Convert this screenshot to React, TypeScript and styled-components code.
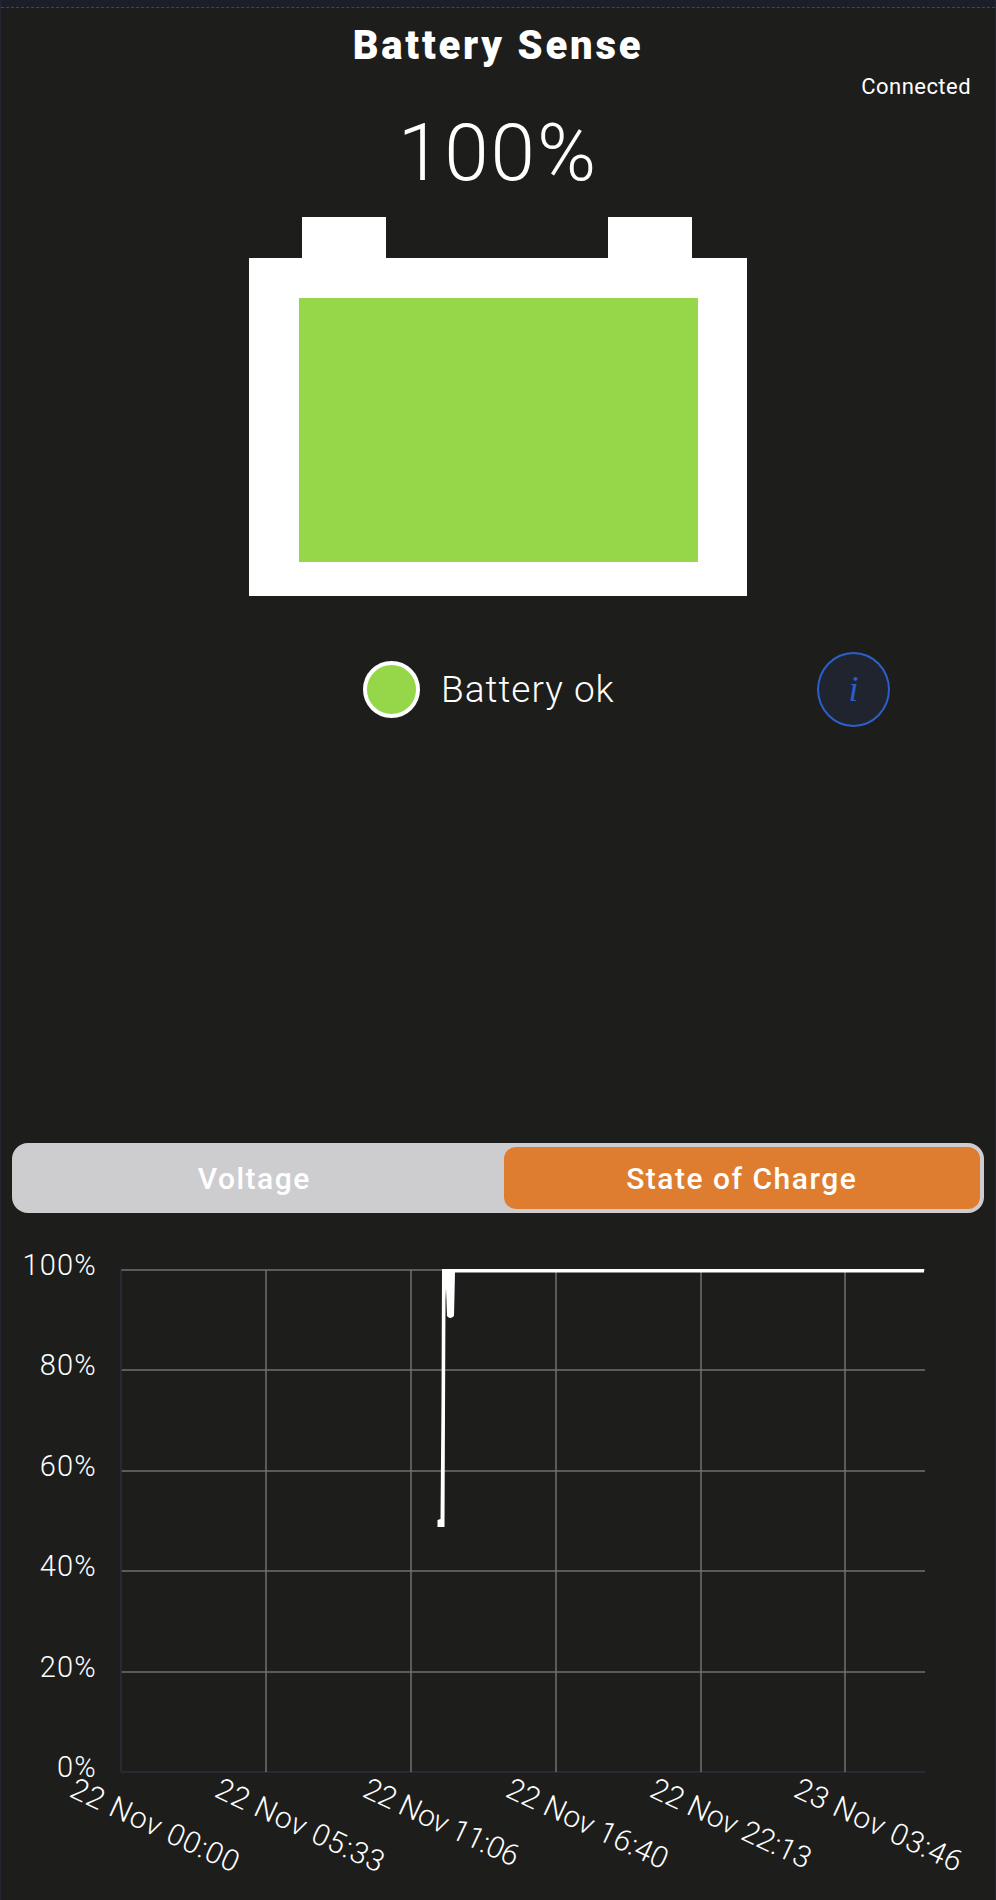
import React from "react";
import styled, { createGlobalStyle } from "styled-components";

const Global = createGlobalStyle`
  html, body { margin: 0; padding: 0; background: #1d1d1c; }
  #root { width: 996px; height: 1900px; overflow: hidden; }
`;

const Page = styled.div`
  width: 996px;
  height: 1900px;
  box-sizing: border-box;
  background: #1d1d1c;
  color: #fff;
  font-family: Roboto, "Liberation Sans", sans-serif;
  display: flex;
  flex-direction: column;
  border-left: 1px solid #242733;
  border-right: 1px solid #242733;
  & > * { flex: none; }
`;

const TopBar = styled.div`
  height: 7px;
  background: #1b1f29;
  border-bottom: 1px dashed #45454a;
`;

const Title = styled.h1`
  margin: 15px 0 0;
  height: 45px;
  line-height: 45px;
  text-align: center;
  font-size: 40px;
  font-weight: 900;
  letter-spacing: 2.8px;
`;

const StatusLabel = styled.div`
  margin: 7px 24px 0 0;
  height: 24px;
  line-height: 24px;
  text-align: right;
  font-size: 22px;
  font-weight: 400;
  letter-spacing: 0.45px;
`;

const Percent = styled.div`
  margin-top: 9px;
  height: 90px;
  line-height: 90px;
  text-align: center;
  font-size: 80px;
  font-weight: 300;
  letter-spacing: 2px;
`;

const BatteryWrap = styled.div`
  margin-top: 19px;
  display: flex;
  justify-content: center;
  height: 380px;
  svg { display: block; }
`;

const StatusRow = styled.div`
  margin-top: 54px;
  padding: 0 105px 0 362px;
  height: 76px;
  display: flex;
  align-items: center;
`;

const Dot = styled.span`
  width: 57px;
  height: 57px;
  box-sizing: border-box;
  border-radius: 50%;
  background: #95d749;
  border: 4px solid #fff;
  flex: none;
`;

const StatusText = styled.span`
  margin-left: 21px;
  font-size: 37px;
  font-weight: 300;
  letter-spacing: 1px;
`;

const InfoButton = styled.button`
  margin-left: auto;
  width: 73px;
  height: 75px;
  padding: 0;
  border-radius: 50%;
  border: 2.5px solid #2b5fcb;
  background: #20242f;
  color: #2b5fcb;
  font-family: "Liberation Serif", serif;
  font-style: italic;
  font-size: 36px;
`;

const Segmented = styled.div`
  margin: 416px 11px 0 11px;
  height: 70px;
  box-sizing: border-box;
  padding: 4px;
  border-radius: 16px;
  background: #cdcdcf;
  display: grid;
  grid-template-columns: 1fr 1fr;
  column-gap: 11px;
`;

const Segment = styled.div<{ $active?: boolean }>`
  border-radius: 12px;
  display: flex;
  align-items: center;
  justify-content: center;
  font-size: 30px;
  font-weight: 500;
  letter-spacing: 1.5px;
  color: #fff;
  background: ${(p) => (p.$active ? "#de7d30" : "transparent")};
`;

const Chart = styled.svg`
  display: block;
  margin-top: 33px;
  text {
    font-family: Roboto, "Liberation Sans", sans-serif;
    font-weight: 300;
    fill: #fff;
  }
`;

const ORIGIN = 1246;
const xs = [120, 265, 410, 555, 700, 844];
const ys = [1270, 1370, 1471, 1571, 1672, 1772];
const yLabels = ["100%", "80%", "60%", "40%", "20%", "0%"];
const xLabels = [
  ["22 Nov 00:00", 67, 0.85],
  ["22 Nov 05:33", 212, 0.85],
  ["22 Nov 11:06", 360, -0.45],
  ["22 Nov 16:40", 503, 0.15],
  ["22 Nov 22:13", 647, 0.05],
  ["23 Nov 03:46", 791, 0.75],
] as const;

export default function App() {
  return (
    <Page>
      <Global />
      <TopBar />
      <Title>Battery Sense</Title>
      <StatusLabel>Connected</StatusLabel>
      <Percent>100%</Percent>
      <BatteryWrap>
        <svg width="498" height="380" viewBox="0 0 498 380">
          <path fill="#fff" d="M0 41H53V0H137V41H359V0H443V41H498V379H0Z" />
          <rect x="50" y="81" width="399" height="264" fill="#95d749" />
        </svg>
      </BatteryWrap>
      <StatusRow>
        <Dot />
        <StatusText>Battery ok</StatusText>
        <InfoButton>i</InfoButton>
      </StatusRow>
      <Segmented>
        <Segment>Voltage</Segment>
        <Segment $active>State of Charge</Segment>
      </Segmented>
      <Chart width="994" height="655" viewBox={`0 ${ORIGIN} 994 655`}>
        {ys.map((y) => (
          <line key={y} x1="120" x2="924" y1={y} y2={y} stroke={y === 1772 ? "#2b2f3c" : "#707070"} strokeWidth="1.5" />
        ))}
        {xs.map((x, i) => (
          <line key={x} x1={x} x2={x} y1="1270" y2="1772" stroke={i === 0 ? "#2b2f3c" : "#707070"} strokeWidth="1.5" />
        ))}
        <path
          fill="#fff"
          d="M441 1269H923V1272.5H454L453 1316Q449 1320 446 1316L445 1288L444.5 1300L443.5 1527H436.5L436.5 1520L439.5 1519L440.5 1400Z"
        />
        {yLabels.map((l, i) => (
          <text key={l} x="96" y={ys[i] + 5} fontSize="29" textAnchor="end" letterSpacing="1.2">
            {l}
          </text>
        ))}
        {xLabels.map(([l, x, sp]) => (
          <text key={l} fontSize="30" letterSpacing={sp} transform={`translate(${x} 1796) rotate(25)`}>
            {l}
          </text>
        ))}
      </Chart>
    </Page>
  );
}
